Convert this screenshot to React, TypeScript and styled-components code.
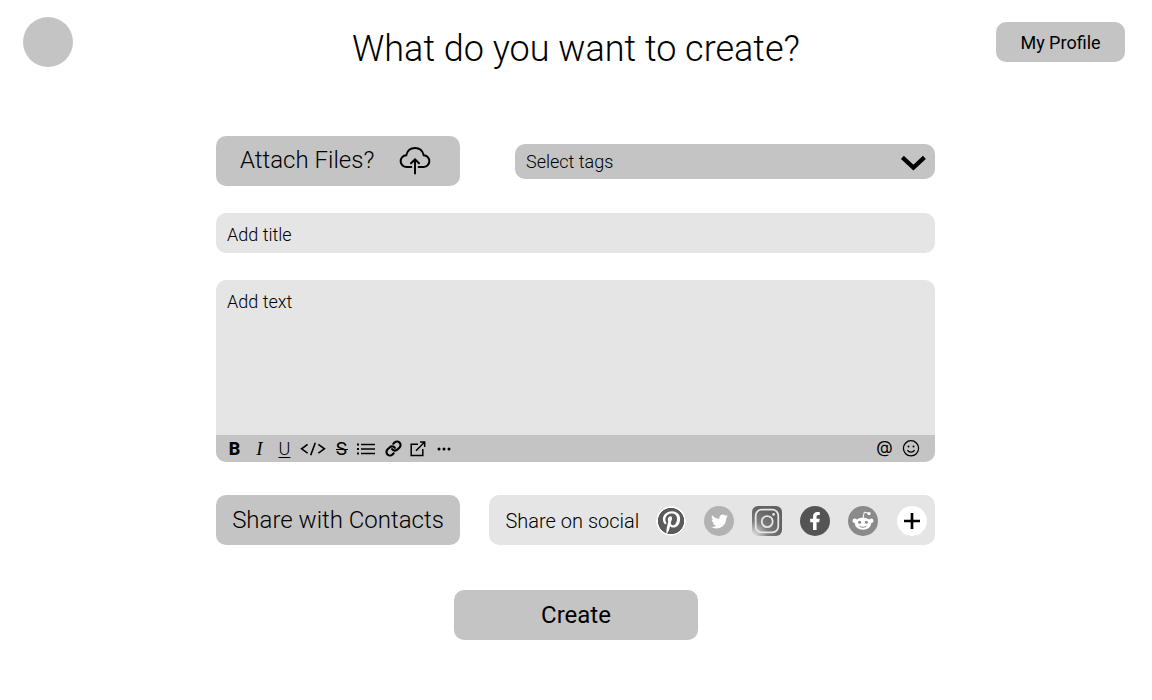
import React from "react";
import styled, { createGlobalStyle } from "styled-components";
import { FaPinterestP, FaTwitter, FaFacebookF } from "react-icons/fa";
import { Link } from "lucide-react";

const GlobalStyle = createGlobalStyle`
  * { box-sizing: border-box; }
  body { margin: 0; background: #fff; color: #000; font-family: Roboto, "Liberation Sans", sans-serif; }
  button, input, textarea { font-family: inherit; color: inherit; border: 0; margin: 0; outline: 0; }
  svg { display: block; flex: none; }
`;

const Page = styled.div`
  width: 1152px;
  height: 700px;
  overflow: hidden;
`;

const Header = styled.header`
  display: grid;
  grid-template-columns: 1fr auto 1fr;
  align-items: start;
  height: 136px;
  padding: 17px 27px 0 23px;
`;

const Avatar = styled.div`
  width: 50px;
  height: 50px;
  border-radius: 50%;
  background: #c4c4c4;
`;

const Title = styled.h1`
  margin: 11px 0 0 4px;
  font-size: 36px;
  line-height: 42px;
  font-weight: 300;
  white-space: nowrap;
`;

const Button = styled.button<{ $w: number; $h?: number; $size?: number; $weight?: number }>`
  display: flex;
  align-items: center;
  justify-content: center;
  width: ${(p) => p.$w}px;
  height: ${(p) => p.$h ?? 50}px;
  padding: 0;
  border-radius: 10px;
  background: #c4c4c4;
  font-size: ${(p) => p.$size ?? 24}px;
  font-weight: ${(p) => p.$weight ?? 300};
  white-space: nowrap;
`;

const ProfileButton = styled(Button)`
  justify-self: end;
  margin-top: 5px;
`;

const AttachButton = styled(Button)`
  justify-content: space-between;
  padding: 0 29px 2px 24px;

  svg { margin-top: 2px; }
`;

const Form = styled.main`
  display: flex;
  flex-direction: column;
  width: 719px;
  margin-left: 216px;
`;

const Row = styled.div`
  display: flex;
  align-items: center;
  justify-content: space-between;
`;

const TagSelect = styled.button`
  display: flex;
  align-items: center;
  justify-content: space-between;
  width: 420px;
  height: 35px;
  padding: 0 8px 0 11px;
  border-radius: 10px;
  background: #c4c4c4;
  font-size: 18px;
  font-weight: 300;
`;

const TitleInput = styled.input`
  height: 40px;
  margin-top: 27px;
  padding: 3px 11px 0;
  border-radius: 10px;
  background: #e5e5e5;
  font-size: 18px;
  font-weight: 300;
  &::placeholder { color: #000; opacity: 1; }
`;

const Editor = styled.section`
  display: flex;
  flex-direction: column;
  height: 182px;
  margin: 27px 0 33px;
  border-radius: 10px;
  overflow: hidden;
  background: #e5e5e5;
`;

const TextInput = styled.textarea`
  flex: 1;
  padding: 11px;
  resize: none;
  background: transparent;
  font-size: 18px;
  line-height: 21px;
  font-weight: 300;
  &::placeholder { color: #000; opacity: 1; }
`;

const Toolbar = styled.div`
  display: flex;
  align-items: center;
  justify-content: space-between;
  height: 27px;
  padding: 0 15px 0 12px;
  background: #c4c4c4;
`;

const Tools = styled.div`
  display: flex;
  align-items: center;
`;

const Tool = styled.span<{ $w: number }>`
  display: flex;
  align-items: center;
  justify-content: center;
  width: ${(p) => p.$w}px;
  height: 27px;
  font-size: 18px;
  line-height: 27px;
`;

const Bold = styled(Tool)`
  font-weight: 800;
`;

const Italic = styled(Tool)`
  font-family: "Liberation Serif", serif;
  font-style: italic;
  font-size: 19px;
`;

const Underline = styled(Tool)`
  font-weight: 300;
  text-decoration: underline;
  text-decoration-thickness: 1px;
  text-underline-offset: 2px;
`;

const Strike = styled(Tool)`
  font-size: 19px;
  background: linear-gradient(#000, #000) center 14px / 12px 1px no-repeat;
`;

const Mention = styled(Tool)`
  font-family: Inter, sans-serif;
  font-size: 17px;
  padding: 0 0 2px 1px;
`;

const Social = styled.section`
  display: flex;
  align-items: center;
  width: 446px;
  height: 50px;
  padding: 2px 8px 0 16.5px;
  border-radius: 10px;
  background: #e5e5e5;
`;

const SocialLabel = styled.span`
  font-size: 20px;
  font-weight: 300;
  white-space: nowrap;
`;

const SocialIcons = styled.div`
  display: flex;
  gap: 18px;
  margin-left: auto;
`;

const Badge = styled.span<{ $bg: string }>`
  display: flex;
  align-items: center;
  justify-content: center;
  width: 30px;
  height: 30px;
  border-radius: 50%;
  background: ${(p) => p.$bg};
  color: #fff;
`;

const PinterestBadge = styled(Badge)`
  padding-top: 3px;
`;

const AddBadge = styled(Badge)`
  margin-left: 1px;
`;

const CreateButton = styled(Button)`
  margin: 45px 0 0 238px;
`;

const CloudIcon = () => (
  <svg width="32" height="30" viewBox="0 0 32 30" fill="none" stroke="#000" strokeWidth="2" strokeLinecap="round">
    <path d="M12.3 21H7.8A5.9 5.9 0 0 1 7.3 9.2C8.3 4.8 11.8 2 16 2s7.7 2.8 8.7 7.2A5.9 5.9 0 0 1 24.2 21h-4.5" />
    <path d="M16 27.6V13.4M12 17.3l4-4 4 4" />
  </svg>
);

const ChevronIcon = () => (
  <svg width="27" height="19" viewBox="0 0 27 19" fill="none" stroke="#000" strokeWidth="4.2">
    <path d="M2.4 5.4 13.4 15.6 24.4 5.4" />
  </svg>
);

const CodeIcon = () => (
  <svg width="26" height="16" viewBox="0 0 26 16" fill="none" stroke="#000" strokeWidth="1.6">
    <path d="M7.6 3.4 1.6 7.8l6 4.4M15.3 1.8l-4.6 12.4M18.4 3.4l6 4.4-6 4.4" />
  </svg>
);

const ListIcon = () => (
  <svg width="20" height="14" viewBox="0 0 20 14">
    <path d="M5 2.5h14M5 7h14M5 11.5h14" stroke="#000" strokeWidth="1.5" />
    <path d="M1 1.5h2v2H1zM1 6h2v2H1zM1 10.5h2v2H1z" />
  </svg>
);

const ExternalIcon = () => (
  <svg width="16" height="16" viewBox="0 0 16 16" fill="none" stroke="#000" strokeWidth="1.5">
    <path d="M8 3.2H1.2v11.3h11.6V8M10 1h4.7v5M14.7 1 6 9.8" />
  </svg>
);

const DotsIcon = () => (
  <svg width="14" height="4" viewBox="0 0 14 4">
    <circle cx="2" cy="2" r="1.5" />
    <circle cx="7" cy="2" r="1.5" />
    <circle cx="12" cy="2" r="1.5" />
  </svg>
);

const SmileIcon = () => (
  <svg width="18" height="18" viewBox="0 0 18 18">
    <g fill="none" stroke="#000" strokeWidth="1.3">
      <circle cx="9" cy="8.3" r="7.6" />
      <path d="M5.4 10.2c1.6 2.5 5.6 2.5 7.2 0" />
    </g>
    <circle cx="6.5" cy="6.5" r="1" />
    <circle cx="11.5" cy="6.5" r="1" />
  </svg>
);

const InstagramIcon = () => (
  <svg width="30" height="30" viewBox="0 0 30 30">
    <defs>
      <radialGradient id="insta" cx="0.06" cy="0.98" r="0.95">
        <stop offset="0" stopColor="#dedede" />
        <stop offset="0.2" stopColor="#bdbdbd" />
        <stop offset="0.5" stopColor="#7d7d7d" />
        <stop offset="1" stopColor="#626262" />
      </radialGradient>
    </defs>
    <rect width="30" height="30" rx="6" fill="url(#insta)" />
    <g fill="none" stroke="#e6e6e6" strokeWidth="1.8">
      <rect x="3.7" y="3.7" width="22.6" height="22.6" rx="6" />
      <circle cx="15.2" cy="15.6" r="5.5" />
    </g>
    <circle cx="21.6" cy="8.4" r="1.4" fill="#e6e6e6" />
  </svg>
);

const RedditIcon = () => (
  <svg width="30" height="30" viewBox="0 0 30 30" fill="#fff">
    <path d="M15 12 16.3 6.1l4.4 1.1" fill="none" stroke="#fff" strokeWidth="1" />
    <circle cx="21" cy="7.6" r="1.7" />
    <circle cx="6.8" cy="14.8" r="2.3" />
    <circle cx="23.2" cy="14.8" r="2.3" />
    <ellipse cx="15" cy="17.6" rx="8.2" ry="6.2" />
    <g fill="#8a8a8a">
      <circle cx="11.6" cy="16.2" r="1.5" />
      <circle cx="18.4" cy="16.2" r="1.5" />
    </g>
    <path d="M11.6 20.1c1.8 1.6 5 1.6 6.8 0" fill="none" stroke="#8a8a8a" strokeWidth="1" />
  </svg>
);

const PlusIcon = () => (
  <svg width="16" height="16" viewBox="0 0 16 16" stroke="#000" strokeWidth="2.7">
    <path d="M8 0v16M0 8h16" />
  </svg>
);

export default function App() {
  return (
    <Page>
      <GlobalStyle />
      <Header>
        <Avatar />
        <Title>What do you want to create?</Title>
        <ProfileButton $w={129} $h={40} $size={18} $weight={400}>My Profile</ProfileButton>
      </Header>
      <Form>
        <Row>
          <AttachButton $w={244}>
            Attach Files?
            <CloudIcon />
          </AttachButton>
          <TagSelect>
            Select tags
            <ChevronIcon />
          </TagSelect>
        </Row>
        <TitleInput placeholder="Add title" />
        <Editor>
          <TextInput placeholder="Add text" />
          <Toolbar>
            <Tools>
              <Bold $w={13}>B</Bold>
              <Italic $w={37}>I</Italic>
              <Underline $w={13}>U</Underline>
              <Tool $w={44}><CodeIcon /></Tool>
              <Strike $w={13}>S</Strike>
              <Tool $w={35}><ListIcon /></Tool>
              <Tool $w={20}><Link size={17} strokeWidth={3} /></Tool>
              <Tool $w={29}><ExternalIcon /></Tool>
              <Tool $w={23}><DotsIcon /></Tool>
            </Tools>
            <Tools>
              <Mention $w={36}>@</Mention>
              <Tool $w={18}><SmileIcon /></Tool>
            </Tools>
          </Toolbar>
        </Editor>
        <Row>
          <Button $w={244}>Share with Contacts</Button>
          <Social>
            <SocialLabel>Share on social</SocialLabel>
            <SocialIcons>
              <PinterestBadge $bg="radial-gradient(circle, #5b5b5b 12.8px, #fff 13.4px, #fff 14.4px, transparent 15px)">
                <FaPinterestP size={23} />
              </PinterestBadge>
              <Badge $bg="#b2b2b2"><FaTwitter size={17} /></Badge>
              <InstagramIcon />
              <Badge $bg="#545454"><FaFacebookF size={18} /></Badge>
              <Badge $bg="#8a8a8a"><RedditIcon /></Badge>
              <AddBadge $bg="#fff"><PlusIcon /></AddBadge>
            </SocialIcons>
          </Social>
        </Row>
        <CreateButton $w={244} $weight={400}>Create</CreateButton>
      </Form>
    </Page>
  );
}
